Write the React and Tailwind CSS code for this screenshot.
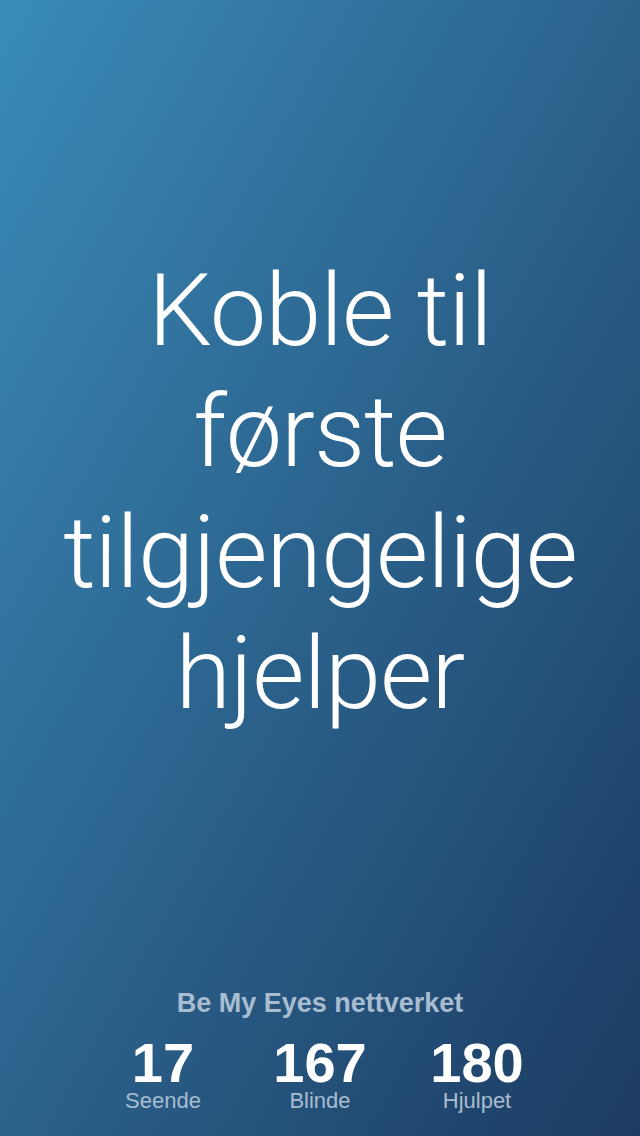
import React from 'react';

const stats = [
    { value: '17', label: 'Seende' },
    { value: '167', label: 'Blinde' },
    { value: '180', label: 'Hjulpet' },
];

export default function App() {
    return (
        <div
            className="w-[640px] h-[1136px] flex flex-col items-center text-white bg-gradient-to-br from-[#3a8cb8] to-[#1c3b62] font-['Liberation_Sans',sans-serif]"
        >
            <div className="flex-1 flex items-center justify-center pb-[4px]">
                <h1 className="text-center text-[101px] leading-[121px] font-light font-['Roboto',sans-serif] tracking-[-1px]">
                    Koble til<br />første<br />tilgjengelige<br />hjelper
                </h1>
            </div>
            <div className="flex flex-col items-center pb-[24px]">
                <p className="text-[27px] font-bold text-[#a9bdd0] leading-[30px]">Be My Eyes nettverket</p>
                <div className="flex mt-[18px]">
                    {stats.map((s) => (
                        <div key={s.label} className="w-[157px] flex flex-col items-center">
                            <span className="text-[56px] font-bold leading-[54px]">{s.value}</span>
                            <span className="text-[22px] text-[#a9bdd0] leading-[22px]">{s.label}</span>
                        </div>
                    ))}
                </div>
            </div>
        </div>
    );
}
